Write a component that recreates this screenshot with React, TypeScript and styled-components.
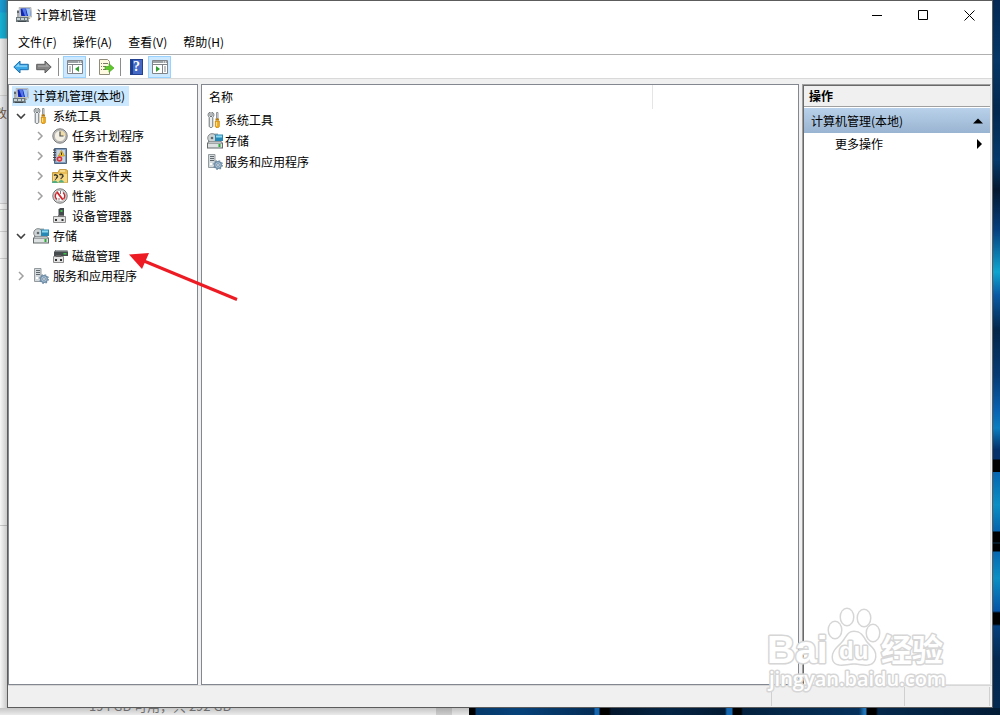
import React from 'react';
import styled, { createGlobalStyle, css } from 'styled-components';

const GlobalStyle = createGlobalStyle`
  *, *::before, *::after { box-sizing: border-box; }
  body {
    margin: 0;
    font-family: "Noto Sans CJK SC", "Noto Sans", sans-serif;
    font-size: 12px;
    line-height: 20px;
    color: #000;
  }
  button { font: inherit; color: inherit; background: none; border: 0; padding: 0; margin: 0; }
  ul { list-style: none; margin: 0; padding: 0; }
  svg { display: block; flex: none; }
`;

/* ---------- desktop behind the window ---------- */

const Desktop = styled.div`
  display: grid;
  grid-template-columns: 7px minmax(0, 1fr) 7px;
  grid-template-rows: minmax(0, 1fr) 7px;
  height: 100vh;
  min-height: 400px;
  overflow: hidden;
  position: relative;
`;

const LeftEdge = styled.div`
  overflow: hidden;
  white-space: nowrap;
  padding-top: 103px;
  color: #6d5340;
  text-indent: -5px;
  background:
    linear-gradient(90deg, rgba(0, 0, 0, 0.02), rgba(0, 0, 0, 0.2)),
    linear-gradient(#1b9fd8 0 12px, #19b4d9 13px 38px, #f0f0f0 39px 95px, #d5d5d5 95px 96px,
      #eceef1 96px 203px, #d0d0d0 203px 204px, #fafafa 204px 209px, #d0d0d0 209px 210px,
      #fafafa 210px 231px, #d6d6d6 231px 232px, #fafafa 232px 258px, #d6d6d6 258px 259px,
      #fcfcfc 259px 525px, #cfcfcf 525px 526px, #fcfcfc 526px);
`;

const RightEdge = styled.div`
  background: linear-gradient(#052a55 0, #063766 60px, #04284f 110px, #053a6c 160px, #04182e 190px,
    #07407f 230px, #0fa5cf 272px, #0a5aa5 295px, #04264a 330px, #073a73 375px, #0a62b0 410px,
    #0b7dc0 428px, #052f68 450px, #052f68 459px, #000 460px 472px, #0765b0 472px, #0b8fc4 505px,
    #0563ac 531px, #000 532px 542px, #0a3350 543px, #000 544px 551px, #0868b0 552px, #0b8fc4 578px,
    #0754a5 611px, #000 613px 624px, #06407c 626px, #04284f 660px, #052a52 100%);
`;

const BottomEdge = styled.div`
  grid-column: 1 / -1;
  display: flex;
  overflow: hidden;
`;

const DriveStrip = styled.div`
  width: 469px;
  flex: none;
  display: flex;
  align-items: flex-end;
  padding-left: 89px;
  font-size: 13px;
  line-height: 18px;
  color: #6e6e6e;
  white-space: nowrap;
  background:
    linear-gradient(rgba(0, 0, 0, 0.2), rgba(0, 0, 0, 0.05)),
    linear-gradient(90deg, #f7f7f7 0 436px, #d8d8d8 436px 452px, #f2f2f2 452px);
`;

const WallpaperStrip = styled.div`
  flex: 1;
  background: linear-gradient(90deg, #000 0 6px, #063a6b 7px, #06427a 50px, #042c56 125px,
    #1466ae 126px 130px, #000 131px 140px, #03172c 142px, #042444 200px, #031a33 256px,
    #1466ae 258px 263px, #000 264px 272px, #04223f 274px, #05305b 390px, #2175b8 395px 397px,
    #000 398px 407px, #04284b 409px, #031c36);
`;

/* ---------- window chrome ---------- */

const Window = styled.main`
  display: flex;
  flex-direction: column;
  min-width: 0;
  border: 1px solid #5c5c5c;
  background: #f0f0f0;
`;

const TitleBar = styled.header`
  display: flex;
  align-items: center;
  height: 28px;
  padding-left: 8px;
  gap: 4px;
  background: #fff;
`;

const Title = styled.h1`
  flex: 1;
  margin: 0;
  font-size: 12px;
  font-weight: 400;
`;

const CaptionButtons = styled.div`
  display: flex;
`;

const CaptionButton = styled.button`
  width: 46px;
  height: 28px;
  display: grid;
  place-items: center;
`;

const MenuBar = styled.nav`
  display: flex;
  align-items: center;
  gap: 16px;
  height: 26px;
  padding: 0 10px;
  background: #fff;
  border-bottom: 1px solid #b0b0b0;
`;

const ToolBar = styled.div`
  display: flex;
  align-items: center;
  height: 24px;
  padding: 0 1px;
  background: #fff;
  border-bottom: 1px solid #d9d9d9;
`;

const ToolButton = styled.button<{ $active?: boolean }>`
  width: 23px;
  height: 22px;
  display: grid;
  place-items: center;
  ${(p) =>
    p.$active &&
    css`
      background: #cce8ff;
      box-shadow: inset 0 0 0 1px #99d1ff;
    `}
`;

const Divider = styled.span`
  width: 1px;
  height: 18px;
  margin: 0 4px 0 3px;
  background: #8c8c8c;
`;

const Body = styled.div`
  flex: 1;
  min-height: 0;
  display: grid;
  grid-template-columns: 190px minmax(0, 1fr) 189px;
  gap: 3px;
  padding: 5px 1px 0 0;
`;

const Pane = styled.section`
  border: 1px solid #828790;
  background: #fff;
  overflow: hidden;
`;

/* ---------- console tree ---------- */

const Tree = styled.ul`
  padding: 1px 3px;
`;

const TreeRow = styled.li<{ $level: number }>`
  display: flex;
  align-items: center;
  height: 20px;
  padding-left: ${(p) => Math.max(0, p.$level - 1) * 19}px;
`;

const Expander = styled.button`
  width: 18px;
  height: 20px;
  margin-right: 2px;
  display: grid;
  place-items: center;
`;

const TreeLabel = styled.button<{ $selected?: boolean }>`
  display: flex;
  align-items: center;
  gap: 4px;
  height: 20px;
  padding: 0 4px 0 1px;
  white-space: nowrap;
  background: ${(p) => (p.$selected ? '#cce8ff' : 'transparent')};
`;

/* ---------- result list ---------- */

const List = styled.table`
  width: 100%;
  border-collapse: collapse;
  table-layout: fixed;
`;

const HeadCell = styled.th<{ $first?: boolean }>`
  height: 24px;
  padding: 0 7px;
  width: ${(p) => (p.$first ? '450px' : 'auto')};
  border-right: ${(p) => (p.$first ? '1px solid #e5e5e5' : '0')};
  text-align: left;
  font-weight: 400;
`;

const Cell = styled.td`
  height: 21px;
  padding: 0 5px;
`;

const ListItem = styled.div`
  display: flex;
  align-items: center;
  gap: 2px;
  height: 21px;
`;

/* ---------- actions pane ---------- */

const ActionsPane = styled.aside`
  border: 1px solid #a0a0a0;
  border-right-color: #e3e3e3;
  border-bottom-color: #e3e3e3;
  box-shadow: inset 1px 1px 0 #696969;
  padding: 1px 0 1px 1px;
  background: #fff;
`;

const ActionsTitle = styled.h2`
  margin: 0;
  height: 21px;
  padding: 0 5px;
  font-size: 12px;
  line-height: 20px;
  font-weight: 700;
  background: #f0f0f0;
  border-bottom: 1px solid #a0a0a0;
`;

const ActionRow = styled.button<{ $heading?: boolean }>`
  display: flex;
  align-items: center;
  justify-content: space-between;
  width: 100%;
  height: ${(p) => (p.$heading ? 25 : 22)}px;
  margin-top: ${(p) => (p.$heading ? 1 : 0)}px;
  padding: ${(p) => (p.$heading ? '0 7px' : '0 7px 0 31px')};
  background: ${(p) => (p.$heading ? 'linear-gradient(#b9d1ea, #99b4d1)' : 'none')};
`;

const StatusBar = styled.footer`
  display: flex;
  justify-content: flex-end;
  height: 22px;
  padding: 1px 2px;
  border-top: 1px solid #d7d7d7;
`;

const StatusCell = styled.div<{ $width: number }>`
  width: ${(p) => p.$width}px;
  border-right: 1px solid #d0d0d0;
`;

/* ---------- overlays ---------- */

const Pointer = styled.svg`
  position: absolute;
  left: 128px;
  top: 250px;
  pointer-events: none;
`;

const Watermark = styled.svg`
  position: absolute;
  right: 50px;
  bottom: 16px;
  overflow: visible;
  pointer-events: none;
`;

/* ---------- icons ---------- */

const Svg = ({ children, w = 16, h = 16 }: { children: React.ReactNode; w?: number; h?: number }) => (
  <svg width={w} height={h} viewBox={`0 0 ${w} ${h}`} aria-hidden="true">
    {children}
  </svg>
);

const ComputerIcon = () => (
  <Svg>
    <path d="M3 .5h12l1 9.500H4z" fill="#cfd0c8" stroke="#a9aaa2" strokeWidth=".6" />
    <path d="M4.500 1.500h9.500l.7 7.500H5.200z" fill="#1226b4" />
    <path d="M10 1.500h4l.7 7.500H12z" fill="#9cc4f4" />
    <path d="M6 1.500h3.500L11 9H9z" fill="#5577e6" />
    <path d="M8 10h5l1.500 2H8z" fill="#a9a99e" />
    <path d="M1 3h2.500v7H1z" fill="#aab0b4" />
    <path d="M1 4h2v2H1z" fill="#5d666c" />
    <path d="M0 10h12l1 5H0z" fill="#6d787d" />
    <path d="M1 11h3v2H1zM5 11h3v2H5zM9 11h2v2H9z" fill="#c8d3d8" />
    <path d="M2 14h8v1H2z" fill="#3f484c" />
  </Svg>
);

const ToolsIcon = () => (
  <Svg>
    <path d="M3 0v4l1 1 1-1V0c2 .8 2.600 3.500.8 5.300V14c0 2-3.600 2-3.600 0V5.300C.4 3.500 1 .8 3 0z" fill="#e9edef" stroke="#5f6568" strokeWidth=".9" />
    <path d="M9.500.5H11v6H9.500z" fill="#e8eaec" stroke="#7b8083" strokeWidth=".8" />
    <path d="M8.500 6.500h3.500v2H8.500z" fill="#b87b0a" />
    <path d="M8.300 9h4v5.500c0 1.500-4 1.500-4 0z" fill="#f5b01c" stroke="#b97a0a" strokeWidth=".7" />
    <path d="M9.500 10v4" stroke="#ffe08a" />
  </Svg>
);

const ClockIcon = () => (
  <Svg>
    <circle cx="8" cy="8" r="7.200" fill="#c4c4c4" stroke="#777" />
    <circle cx="8" cy="8" r="5.600" fill="#f4f1e4" stroke="#999" strokeWidth=".6" />
    <path d="M8 2.500A5.500 5.500 0 0 1 13.500 8H8z" fill="#f0dca8" />
    <path d="M8 3.500V8h3.500" fill="none" stroke="#4a4f55" strokeWidth="1.200" />
  </Svg>
);

const EventIcon = () => (
  <Svg>
    <path d="M2.500.5h12v15h-12z" fill="#7f9cc0" stroke="#4e6580" />
    <path d="M4.500 2h8.500v12H4.500z" fill="#c9d4df" />
    <path d="M1 2h3M1 4.500h3M1 7h3M1 9.500h3M1 12h3" stroke="#444" />
    <path d="M9.500 2.500 12.500 8h-6z" fill="#f6c933" stroke="#b98d0d" strokeWidth=".7" />
    <path d="M9.500 4.500v2.500" stroke="#333" />
    <circle cx="7.500" cy="11" r="2.800" fill="#d8343a" />
    <path d="m6.500 10 2 2m0-2-2 2" stroke="#fff" strokeWidth=".8" />
  </Svg>
);

const SharedIcon = () => (
  <Svg>
    <path d="M.5 4.500H6l1.500-3H14l1.500 1v12H.5z" fill="#e8bd55" stroke="#b98c2b" strokeWidth=".8" />
    <path d="M1 6h14v8.500H1z" fill="#f7d981" />
    <path d="M8 2.500h5v1H8z" fill="#fff4c7" />
    <path d="M2 7.500c1-1 3.500-1 3.500 1.200L3 11.500M7.500 7c1-1 3.500-1 3.500 1.200L8.500 11" fill="none" stroke="#3e3b2a" strokeWidth="1.500" />
    <path d="M0 15c.5-3.500 5-3.500 6 0zM6.500 14.500c.5-3.500 5-3.500 5.500 0z" fill="#4fae86" />
    <circle cx="3" cy="10" r="1" fill="#eac39a" />
    <circle cx="8.500" cy="9.500" r="1" fill="#eac39a" />
  </Svg>
);

const PerfIcon = () => (
  <Svg>
    <circle cx="8" cy="8" r="7.200" fill="#ddd" stroke="#6f6f6f" />
    <circle cx="8" cy="8" r="5.600" fill="#fff" stroke="#999" strokeWidth=".6" />
    <path d="M5 11.500a4.500 4.500 0 0 1-.5-6.500M11 4.500a4.500 4.500 0 0 1 .5 6.500" fill="none" stroke="#c9252b" strokeWidth="1.300" />
    <path d="m4.800 3.800 6 8" stroke="#d3262c" strokeWidth="1.900" />
    <path d="M8.500 3v3M7 10v2.500" stroke="#555" strokeWidth=".8" />
  </Svg>
);

const DeviceIcon = () => (
  <Svg>
    <path d="M6.500 1.500 8 0h4v8H6.500z" fill="#44494c" />
    <path d="M8.500 2h2v2h-2z" fill="#39c64a" />
    <path d="M1.500 8.500h12v6h-12z" fill="#e3e3e3" stroke="#8c8c8c" />
    <path d="M3 11h2v2H3zM9.500 11h2v2h-2z" fill="#333" />
    <path d="M6 7h6v2H6z" fill="#777" />
  </Svg>
);

const StorageIcon = () => (
  <Svg>
    <path d="M1 3 4 .5h7V9H1z" fill="#a4abad" />
    <circle cx="5" cy="5" r="4.300" fill="#cdd2d3" stroke="#73797c" strokeWidth=".8" />
    <circle cx="5" cy="5" r="1.300" fill="#60696d" />
    <path d="M8 1.500h8V8H8z" fill="#2688b5" />
    <path d="M9 2.500h6v2H9z" fill="#8cd8f0" />
    <path d="m2 8-2 2v5.500h16V10l-2-2z" fill="#646b6d" />
    <path d="M1 10.500h14v4H1z" fill="#dde1e1" />
    <path d="M2.500 8.500h11L15 10H1z" fill="#bfc5c6" />
    <path d="M11.500 11h2v3h-2z" fill="#2cab38" />
  </Svg>
);

const DiskIcon = () => (
  <Svg>
    <path d="M3.500 2H15l1 2v4H2V4z" fill="#464b4d" />
    <path d="M4 2h11l.8 1.500H3z" fill="#a0a5a7" />
    <path d="M11.500 5h3v1.500h-3z" fill="#3ac84a" />
    <path d="M1.500 8.500h10v6h-10z" fill="#e3e3e3" stroke="#8c8c8c" />
    <path d="M3 11h2v2H3zM8 11h2v2H8z" fill="#333" />
    <path d="M4 7h5v2H4z" fill="#666" />
  </Svg>
);

const ServicesIcon = () => (
  <Svg>
    <path d="M1.500.5h6.500v13H1.500z" fill="#d4dadd" stroke="#8a9295" strokeWidth=".9" />
    <path d="M3 2.500h4M3 4.500h4M3 6.500h4" stroke="#5f686c" />
    <path d="M3 9h2v2H3z" fill="#fff" />
    <circle cx="11" cy="11" r="3.300" fill="#a9c4d9" stroke="#6c8aa3" strokeWidth="1.200" />
    <circle cx="11" cy="11" r="4.300" fill="none" stroke="#6c8aa3" strokeWidth="1.200" strokeDasharray="1.700 1.680" />
    <circle cx="11" cy="11" r="1.300" fill="#fff" stroke="#56718a" strokeWidth=".7" />
  </Svg>
);

const ChevronRight = () => (
  <Svg w={8} h={10}>
    <path d="m2 1 4 4-4 4" fill="none" stroke="#a0a0a0" strokeWidth="1.500" />
  </Svg>
);

const ChevronDown = () => (
  <Svg w={10} h={8}>
    <path d="m1 2 4 4 4-4" fill="none" stroke="#404040" strokeWidth="1.600" />
  </Svg>
);

const ArrowLeft = () => (
  <Svg h={14}>
    <path d="M.8 7 7 1v3.300h8.300v5.400H7V13z" fill="#3ba9e8" stroke="#1c6fae" />
    <path d="M2.500 6.800 6 3.400v2h8v1.400z" fill="#8fd6f8" />
  </Svg>
);

const ArrowRight = () => (
  <Svg h={14}>
    <path d="M15.200 7 9 1v3.300H.7v5.400H9V13z" fill="#858585" stroke="#5e5e5e" />
    <path d="M13.500 6.800 10 3.400v2H2v1.400z" fill="#a8a8a8" />
  </Svg>
);

const PanelIcon = ({ flip }: { flip?: boolean }) => (
  <Svg h={14}>
    <path d="M.5.5h15v13H.5z" fill="#fff" stroke="#808488" />
    <path d="M1 1h14v2H1z" fill="#9da2a6" />
    <path d="M11 2h1M13 2h1" stroke="#fff" />
    <path d="M1 4.500h14" stroke="#808488" />
    <path d={flip ? 'M10.500 5v8' : 'M5.500 5v8'} stroke="#808488" />
    <path d={flip ? 'M12 7h2M12 9h2M12 11h2' : 'M2 7h2M2 9h2M2 11h2'} stroke="#808488" />
    <path d={flip ? 'm4 6 4 3-4 3z' : 'm12 6-4 3 4 3z'} fill="#2f9e2f" />
  </Svg>
);

const ExportIcon = () => (
  <Svg>
    <path d="M1.500.5h8l2 2v13h-10z" fill="#fffbe2" stroke="#8f8c7b" />
    <path d="M3 4.500h1M3 7.500h1M3 10.500h1M5 4.500h5M5 7.500h3M5 10.500h3" stroke="#7d7a6b" />
    <path d="M7 7.500h4V4.700L16 9l-5 4.300v-2.800H7z" fill="#5fc92c" stroke="#3f981a" strokeWidth=".6" />
  </Svg>
);

const HelpMark = styled.span`
  width: 13px;
  height: 16px;
  background: linear-gradient(90deg, #1e3b8e 2px, #4468c6 2px);
  border: 1px solid #24418f;
  color: #fff;
  font: 700 14px/14px "Liberation Serif", serif;
  text-align: center;
`;

/* ---------- content ---------- */

type Node = { label: string; icon: React.ReactNode; level: number; state?: 'open' | 'closed'; selected?: boolean };

const nodes: Node[] = [
  { label: '计算机管理(本地)', icon: <ComputerIcon />, level: 0, selected: true },
  { label: '系统工具', icon: <ToolsIcon />, level: 1, state: 'open' },
  { label: '任务计划程序', icon: <ClockIcon />, level: 2, state: 'closed' },
  { label: '事件查看器', icon: <EventIcon />, level: 2, state: 'closed' },
  { label: '共享文件夹', icon: <SharedIcon />, level: 2, state: 'closed' },
  { label: '性能', icon: <PerfIcon />, level: 2, state: 'closed' },
  { label: '设备管理器', icon: <DeviceIcon />, level: 2 },
  { label: '存储', icon: <StorageIcon />, level: 1, state: 'open' },
  { label: '磁盘管理', icon: <DiskIcon />, level: 2 },
  { label: '服务和应用程序', icon: <ServicesIcon />, level: 1, state: 'closed' },
];

const items = [
  { label: '系统工具', icon: <ToolsIcon /> },
  { label: '存储', icon: <StorageIcon /> },
  { label: '服务和应用程序', icon: <ServicesIcon /> },
];

const menus = ['文件(F)', '操作(A)', '查看(V)', '帮助(H)'];

export default function App() {
  return (
    <Desktop>
      <GlobalStyle />
      <LeftEdge>改</LeftEdge>
      <Window>
        <TitleBar>
          <ComputerIcon />
          <Title>计算机管理</Title>
          <CaptionButtons>
            <CaptionButton aria-label="最小化">
              <Svg w={11} h={11}><path d="M0 5.500h10" stroke="#000" /></Svg>
            </CaptionButton>
            <CaptionButton aria-label="最大化">
              <Svg w={11} h={11}><path d="M.5.5h9v9h-9z" fill="none" stroke="#000" /></Svg>
            </CaptionButton>
            <CaptionButton aria-label="关闭">
              <Svg w={11} h={11}><path d="m.5.5 10 10m0-10-10 10" stroke="#000" /></Svg>
            </CaptionButton>
          </CaptionButtons>
        </TitleBar>
        <MenuBar>
          {menus.map((m) => (
            <button key={m}>{m}</button>
          ))}
        </MenuBar>
        <ToolBar>
          <ToolButton aria-label="后退"><ArrowLeft /></ToolButton>
          <ToolButton aria-label="前进"><ArrowRight /></ToolButton>
          <Divider />
          <ToolButton $active aria-label="显示/隐藏控制台树"><PanelIcon /></ToolButton>
          <Divider />
          <ToolButton aria-label="导出列表"><ExportIcon /></ToolButton>
          <Divider />
          <ToolButton aria-label="帮助"><HelpMark>?</HelpMark></ToolButton>
          <ToolButton $active aria-label="显示/隐藏操作窗格"><PanelIcon flip /></ToolButton>
        </ToolBar>
        <Body>
          <Pane>
            <Tree>
              {nodes.map((n) => (
                <TreeRow key={n.label} $level={n.level}>
                  {n.level > 0 && (
                    <Expander aria-label={n.label} disabled={!n.state}>
                      {n.state === 'open' && <ChevronDown />}
                      {n.state === 'closed' && <ChevronRight />}
                    </Expander>
                  )}
                  <TreeLabel $selected={n.selected}>
                    {n.icon}
                    {n.label}
                  </TreeLabel>
                </TreeRow>
              ))}
            </Tree>
          </Pane>
          <Pane>
            <List>
              <thead>
                <tr>
                  <HeadCell $first>名称</HeadCell>
                  <HeadCell />
                </tr>
              </thead>
              <tbody>
                {items.map((i) => (
                  <tr key={i.label}>
                    <Cell colSpan={2}>
                      <ListItem>
                        {i.icon}
                        {i.label}
                      </ListItem>
                    </Cell>
                  </tr>
                ))}
              </tbody>
            </List>
          </Pane>
          <ActionsPane>
            <ActionsTitle>操作</ActionsTitle>
            <ActionRow $heading>
              计算机管理(本地)
              <Svg w={10} h={6}><path d="m0 5.500 5-5 5 5z" /></Svg>
            </ActionRow>
            <ActionRow>
              更多操作
              <Svg w={8} h={10}><path d="m2 0 5 5-5 5z" /></Svg>
            </ActionRow>
          </ActionsPane>
        </Body>
        <StatusBar>
          <StatusCell $width={1} />
          <StatusCell $width={133} />
          <StatusCell $width={85} />
        </StatusBar>
      </Window>
      <RightEdge />
      <BottomEdge>
        <DriveStrip>194 GB 可用，共 292 GB</DriveStrip>
        <WallpaperStrip />
      </BottomEdge>

      <Pointer width="112" height="52" viewBox="0 0 112 52" aria-hidden="true">
        <path d="M16 11 109 49.500" stroke="#ed1c24" strokeWidth="3" />
        <path d="M1 4.500 21 3l-7 16z" fill="#ed1c24" />
      </Pointer>

      <Watermark width="184" height="94" viewBox="0 0 184 94">
        <g fill="#fff" stroke="#d6d6d6" strokeWidth="3" strokeLinejoin="round" paintOrder="stroke">
          <ellipse cx="69" cy="25" rx="6" ry="8" />
          <ellipse cx="81" cy="12" rx="6" ry="8" />
          <ellipse cx="98" cy="13" rx="6" ry="8" />
          <ellipse cx="107" cy="28" rx="6" ry="8" />
          <path d="M88 27c7 0 9 5 12 10 4 5 10 8 9 15-1 8-8 8-14 7-4-1-10-1-14 0-7 1-14 1-14-7 0-7 6-10 10-15s5-10 11-10z" />
          <text x="1" y="58" fontFamily="Liberation Sans, sans-serif" fontSize="39" fontWeight="700">Bai</text>
          <text x="73" y="54" fontFamily="Liberation Sans, sans-serif" fontSize="24" fontWeight="700">du</text>
          <text x="115" y="56" fontFamily="Noto Sans CJK SC, sans-serif" fontSize="31" fontWeight="700">经验</text>
          <text x="3" y="81" fontFamily="Open Sans, sans-serif" fontSize="20" fontWeight="600">jingyan.baidu.com</text>
        </g>
      </Watermark>
    </Desktop>
  );
}
